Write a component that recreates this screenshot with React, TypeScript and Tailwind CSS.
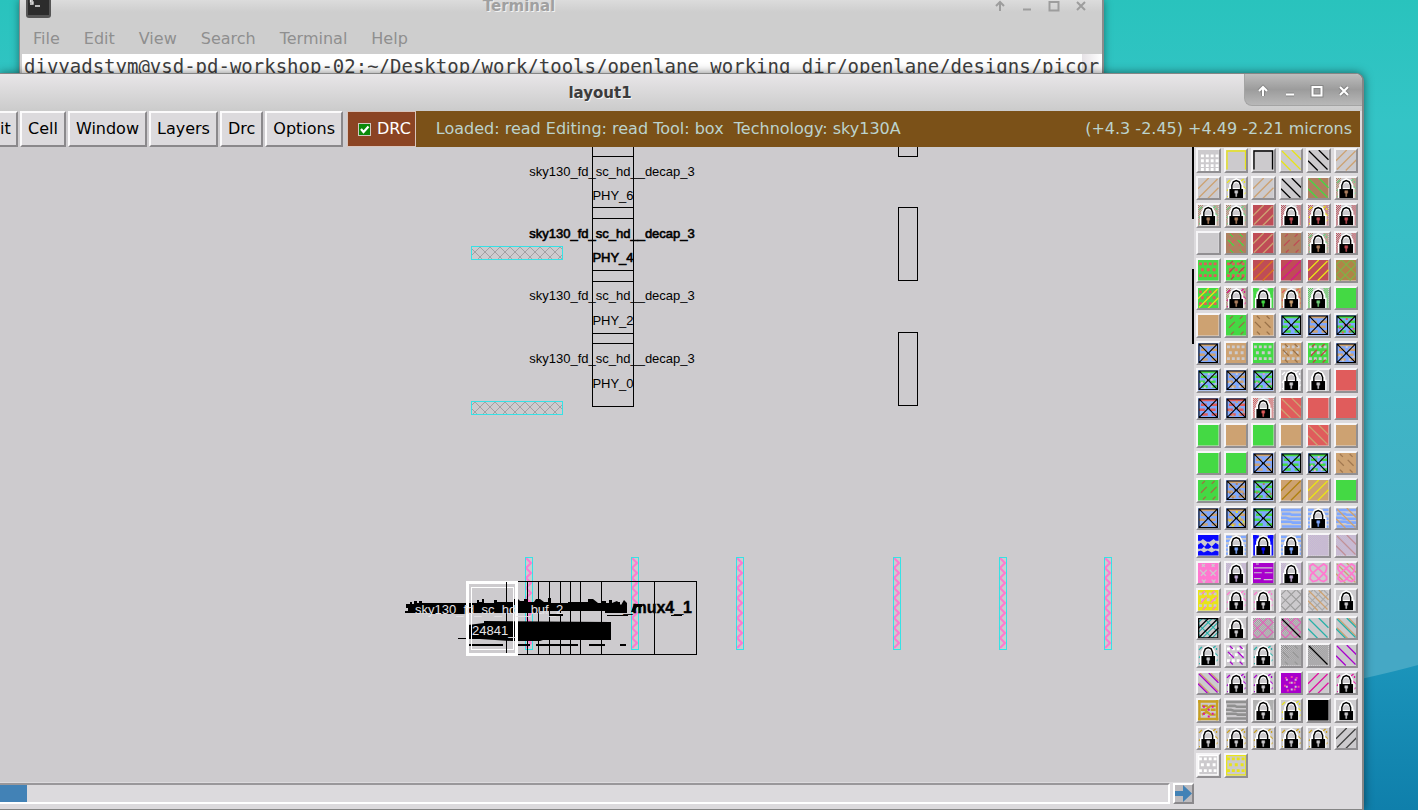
import React from "react";

/* ---------- layer swatches ---------- */

type Layer = [kind: string, color: string];
type SwatchSpec = { bg?: string; layers?: Layer[] };

const GRAY = "#cccacd";
const TAN = "#cda272";
const BROWN = "#ae8060";
const GREEN = "#44d944";
const RED = "#e05c5c";
const BRICK = "#bf4c56";
const BLUE = "#7fa8ff";
const TEAL = "#28b0a8";
const PINK = "#ff78d0";
const PURPLE = "#a800cc";
const GOLD = "#c8a020";
const LAV = "#c4acd8";
const YELLOW = "#e8e418";
const BLACK = "#000000";

const s = (bg?: string, ...layers: Layer[]): SwatchSpec => ({ bg, layers });
const lock = (key: string, ...layers: Layer[]): SwatchSpec => ({ layers: [...layers, ["lock", key]] });
const cross = (...colors: string[]): SwatchSpec => ({
  bg: BLUE,
  layers: [...colors.map((c, i): Layer => [i === 0 ? "bands" : "specks", c]), ["xbox", BLACK]],
});

const swatches: SwatchSpec[] = [
  s(GRAY, ["grid", "#fff"]), s(GRAY, ["frame", YELLOW]), s(GRAY, ["frame", BLACK]), s(GRAY, ["back", YELLOW]), s(GRAY, ["back", BLACK]), s(GRAY, ["fwd", TAN]),
  s(GRAY, ["fwd", TAN]), lock(GRAY, ["edge", YELLOW]), s(GRAY, ["fwd", TAN]), s(GRAY, ["back", BLACK]), s(BROWN, ["back", GREEN]), lock(BROWN, ["noise", BROWN], ["edge", "#6fd08a"]),
  lock(BROWN, ["noise", BROWN], ["edge", "#6fd08a"]), lock(BROWN, ["noise", BROWN], ["edge", "#6fd08a"]), s(BRICK, ["fwd", TAN]), lock(BRICK, ["noise", BRICK]), lock(BRICK, ["noise", BRICK], ["edge", YELLOW]), lock(BRICK, ["noise", BRICK]),
  s(GRAY), s(BROWN, ["shortf", RED], ["shortb", GREEN]), s(BRICK, ["fwd", TAN]), s(BROWN, ["shortf", BRICK]), lock(BROWN, ["noise", BROWN], ["edge", "#6fd08a"]), lock(BRICK, ["noise", BRICK]),
  s(GREEN, ["dots", RED]), s(GREEN, ["dots", RED], ["shortf", "#b04848"]), s(BRICK, ["fwd", "#d87820"]), s(BRICK, ["fwd", "#d8188c"]), s(BRICK, ["fwd", YELLOW]), s("#b08448", ["net", "#7cb448"]),
  s(GREEN, ["dots", RED], ["fwd", YELLOW]), lock(BROWN, ["noise", BROWN], ["edge", "#d8188c"]), lock(GREEN, ["sides", GREEN]), lock(TAN, ["sides", TAN], ["edge", RED]), lock("#6fd07a", ["noise", "#48d048"]), s(GREEN),
  s(TAN), s(GREEN, ["shortf", "#987048"]), s(TAN, ["shortb", "#987048"]), cross(GREEN), cross(TAN), cross(GREEN, RED),
  cross(TAN), s(TAN, ["dots", GRAY]), s(GREEN, ["dots", GRAY]), s(TAN, ["dots", GRAY], ["shortb", "#987048"]), s(GREEN, ["dots", GRAY], ["shortf", "#c04040"]), cross(TAN, GRAY),
  cross(GREEN, GRAY), cross(TAN, GRAY), cross(GREEN, "#d8a0c0"), lock(GRAY, ["edge", "#fff"]), lock(GRAY), s(RED),
  cross(RED), cross(RED, TAN), lock(RED, ["noise", RED]), s(RED, ["back", TAN]), s(RED), s(RED),
  s(GREEN), s(TAN), s(GREEN), s(TAN), s(RED, ["back", TAN]), s(TAN),
  s(GREEN), s(GREEN), cross(TAN), cross(GREEN), cross(GREEN, "#f0b0d0"), s(TAN, ["shortb", "#a07850"]),
  s(GREEN, ["shortf", "#a07040"]), cross(TAN, BROWN), cross(GREEN, BROWN), s(TAN, ["fwd", "#b08010"]), s(TAN, ["fwd", YELLOW]), s(GREEN),
  cross(TAN), cross(TAN, YELLOW), cross(GREEN), s(GRAY, ["waves", BLUE]), lock(BLUE, ["wavesides", BLUE]), s(GRAY, ["waves", BLUE], ["back", TAN]),
  s(GRAY, ["wedges", "#0808ff"]), lock(BLUE, ["wavesides", BLUE]), lock("#0808ff", ["sides", "#0808ff"]), lock(BLUE, ["wavesides", BLUE]), s(GRAY, ["check", LAV]), s(GRAY, ["check", LAV], ["back", "#c09098"]),
  s(PINK, ["shortb", GRAY], ["shortf", GRAY]), lock(LAV, ["noise", LAV]), s(PURPLE, ["slots", GRAY]), lock(LAV, ["noise", LAV]), s(GRAY, ["loops", PINK]), s(GRAY, ["back", TAN], ["loops", PINK]),
  s(YELLOW, ["dots", GRAY], ["shortf", PINK]), lock(GRAY, ["edge", PINK]), lock(GRAY, ["edge", PINK]), s(GRAY, ["net", "#9c9c9c"]), s(GRAY, ["net", "#a8a8a8"], ["back", TAN]), lock(GRAY),
  s(GRAY, ["net", TEAL], ["fwd", BLACK], ["box", BLACK]), lock(GRAY), s(GRAY, ["check", "#989898"], ["net", "#e060b8"]), s(GRAY, ["check", "#989898"], ["net", "#e060b8"], ["diag", BLACK]), s(GRAY, ["back", TEAL]), s(GRAY, ["back2", TAN], ["back", TEAL]),
  lock(GRAY, ["edge", TEAL]), s(GRAY, ["dots", "#fff"], ["shortb", PURPLE]), lock(GRAY, ["edge", TEAL]), s(GRAY, ["check", "#8c8c8c"], ["shortb", "#989898"]), s(GRAY, ["check", "#8c8c8c"], ["diag", BLACK]), s(GRAY, ["back", PURPLE]),
  s(GRAY, ["back2", TAN], ["back", PURPLE]), lock(GRAY, ["edge", PURPLE]), lock(GRAY, ["edge", PURPLE]), s(PURPLE, ["specks", "#f048a8"], ["pin", GRAY]), s(GRAY, ["fwd", "#e010a0"]), lock(GRAY, ["edge", "#e010a0"]),
  s(GRAY, ["goldmesh", GOLD], ["pin", "#e010a0"]), s(GRAY, ["waves", "#909090"]), lock(GRAY, ["sides", "#b0b0b0"]), lock(GRAY, ["edge", YELLOW]), s(BLACK), lock(GRAY),
  lock(GRAY, ["edge", GOLD]), lock(GRAY, ["edge", GOLD]), lock(GRAY, ["edge", GOLD]), lock(GRAY, ["edge", GOLD]), lock(GRAY, ["edge", GOLD]), s(GRAY, ["fwd", "#404040"]),
  s(GRAY, ["dots", "#fff"], ["box", "#fff"]), s(GRAY, ["dots", YELLOW], ["box", YELLOW]),
];

const checkPath = (x0: number, x1: number) => {
  let d = "";
  for (let y = 0; y < 21; y++) for (let x = x0; x < x1; x++) if ((x + y) % 2 === 0) d += `M${x} ${y}h1v1h-1z`;
  return d;
};
const FULL_CHECK = checkPath(0, 21);
const SIDE_CHECK = checkPath(0, 5) + checkPath(16, 21);

function Mark({ kind, color }: { kind: string; color: string }) {
  const line = { stroke: color, fill: "none", strokeWidth: 1.3 };
  switch (kind) {
    case "back":
      return <path d="M1 1L20 20M11 0L21 10M0 11L10 21" {...line} />;
    case "back2":
      return <path d="M2 0L21 19M13 0L21 8M1 10L12 21" {...line} />;
    case "fwd":
      return <path d="M1 20L20 1M0 11L11 0M10 21L21 10" {...line} />;
    case "diag":
      return <path d="M1 1L20 20" {...line} />;
    case "shortf":
      return <path d="M3 13L9 7M13 13L19 7M4 4L7 1M14 4L17 1M5 20L8 17M15 20L18 17" {...line} />;
    case "shortb":
      return <path d="M2 7L8 13M12 7L18 13M4 1L7 4M14 1L17 4M4 17L7 20M14 17L17 20" {...line} />;
    case "dots":
      return <path d="M1 4h3M6 4h3M11 4h3M16 4h3M3 10h3M9 10h3M15 10h3M1 16h3M6 16h3M11 16h3M16 16h3" stroke={color} strokeWidth="3" />;
    case "grid":
      return <path d="M3 6h18M3 11h18M3 16h18M3 20h18" stroke={color} strokeWidth="3" strokeDasharray="3 2" />;
    case "frame":
      return <path d="M1 20V1H20V20" stroke={color} fill="none" strokeWidth="1.4" />;
    case "box":
      return <path d="M.7 .7H20.3V20.3H.7Z" {...line} />;
    case "net":
      return <path d="M0 5L5 0M0 15L15 0M4 21L21 4M14 21L21 14M0 6L15 21M0 16L5 21M6 0L21 15M16 0L21 5" {...line} strokeWidth="1.1" />;
    case "loops":
      return <path d="M2 3L5 1L9 4L16 11L19 14V17L16 19L13 18L3 8L2 6ZM19 3L16 1L12 4L3 12L2 16L5 19L9 18L18 9L19 6Z" {...line} strokeWidth="1.8" />;
    case "check":
      return <path d={FULL_CHECK} fill={color} />;
    case "noise":
      return <path d={SIDE_CHECK} fill={color} />;
    case "edge":
      return <path d="M1 5L4 2M14 4L18 1M17 8L20 11M1 13L3 11M17 18L20 15M19 5V3M1 19H3" {...line} />;
    case "sides":
      return <path d="M2 0V21M19 0V21M0 2H6M15 2H21" stroke={color} strokeWidth="3.4" />;
    case "wavesides":
      return <path d="M0 2H6M0 6H5M0 11H5M0 15H5M0 19H5M15 2H21M16 6H21M16 11H21M16 15H21M16 19H21" stroke={color} strokeWidth="2.4" />;
    case "waves":
      return <path d="M0 2H21M1 6H9L11 7H21M0 10H5L8 11H21M0 14H10L12 15H21M1 19H21" {...line} strokeWidth="2.6" />;
    case "wedges":
      return <path d="M0 0H21V6H18L16 4L12 7H9L5 4L3 6H0ZM0 10L3 8L7 12L10 8L14 12L18 8L21 10V14H16L14 12L11 14H8L6 12L4 14H0ZM0 17L3 16L6 18L10 16L14 18L18 16L21 17V21H0Z" fill={color} />;
    case "bands":
      return <path d="M1 2H20M3 7H9M13 7H20M1 12H7M12 12H18M4 17H10M14 17H20" stroke={color} strokeWidth="2.6" />;
    case "specks":
      return <path d="M4 5h2M15 5h2M8 10h2M13 10h2M3 13h2M17 14h2M6 18h2M13 17h2M10 4h2" stroke={color} strokeWidth="2" />;
    case "slots":
      return <path d="M1 5H20M1 10H9M12 10H20M1 16H8M11 17H20M3 1H6" stroke={color} strokeWidth="1.2" />;
    case "pin":
      return <path d="M5 7h2M14 7h2M10 10h2M5 14h2M14 14h2M10 17h2" stroke={color} strokeWidth="2" />;
    case "goldmesh":
      return <path d="M0 1.5H21M1.5 0V21M19.5 0V21M0 19.5H21M3 10H8L13 6H18M4 15L9 12L13 15H18M4 6H10M13 10H18" {...line} strokeWidth="2.4" />;
    case "xbox":
      return <path d="M1 1H20V20H1ZM1 1L20 20M20 1L1 20M9 10.5H12" {...line} strokeWidth="1.1" />;
    case "lock":
      return (
        <g>
          <path d="M5.5 12V7.5L7.5 4L10.5 2.5L13.5 4L15.5 7.5V12" fill="none" stroke="#fff" strokeWidth="4.6" />
          <path d="M2 10H19V21H2Z" fill="#fff" />
          <path d="M7 10V7L10.5 4.5L14 7V10Z" fill={GRAY} />
          <path d="M6 12V7.5L7.5 4L10.5 2.6L13.5 4L15 7.5V12" fill="none" stroke="#000" strokeWidth="1.5" />
          <path d="M3.5 11.3H17.5V20.6H3.5Z" fill="#000" />
          <path d="M9 13H12V15.5H11V19H10V15.5H9Z" fill={color} stroke={color} strokeWidth=".5" />
        </g>
      );
    default:
      return null;
  }
}

function Swatch({ spec, index }: { spec: SwatchSpec; index: number }) {
  return (
    <div className="aspect-square pt-px pr-0.5 pb-0.5 pl-px">
      <button
        aria-label={`Layer ${index + 1}`}
        className="block size-full border-2 border-t-[#f6f5f7] border-r-[#918f92] border-b-[#918f92] border-l-[#f6f5f7] bg-[#dcdadd]"
      >
        <svg viewBox="0 0 21 21" className="block size-full">
          <rect width="21" height="21" fill={spec.bg ?? GRAY} />
          {spec.layers?.map(([kind, color], i) => <Mark key={i} kind={kind} color={color} />)}
        </svg>
      </button>
    </div>
  );
}

/* ---------- layout canvas ---------- */

const columnEdges = [9, 60, 71, 123, 134, 186, 196];
const cells = [
  { type: 29, id: 53, name: "PHY_6" },
  { type: 91, id: 115, name: "PHY_4", strong: true },
  { type: 153, id: 178, name: "PHY_2" },
  { type: 216, id: 241, name: "PHY_0" },
];
const straps = [525, 631, 736, 893, 999, 1104];
const dividers = [527, 538, 549, 560, 570, 580, 601, 654];
const zigzag = (x: number) => {
  let d = `M${x + 1} 411`;
  for (let i = 1; i <= 18; i++) d += `L${x + (i % 2 ? 6 : 1)} ${411 + i * 5}`;
  return d;
};

function LayoutCanvas() {
  return (
    <svg className="block size-full font-['Liberation_Sans',sans-serif]" shapeRendering="crispEdges">
      <defs>
        <pattern id="mesh" width="10" height="10" patternUnits="userSpaceOnUse">
          <path d="M0 0L10 10M10 0L0 10" stroke="#a2a0a3" strokeWidth="1" shapeRendering="auto" />
        </pattern>
      </defs>

      <g fill="none" stroke="#000" strokeWidth="1">
        <path d="M592.5 0V259.5H633.5V0" strokeWidth="1.4" />
        {columnEdges.map((y) => <path key={y} d={`M592 ${y}.5H634`} />)}
        <path d="M898.500 0V9.500H917.500V0" />
        <rect x="898.5" y="60.5" width="19" height="73" />
        <rect x="898.5" y="185.5" width="19" height="73" />
        <path d="M1193 0V72M1193 122V197" strokeWidth="2" />
      </g>

      {[100, 255].map((y) => (
        <rect key={y} x="471.5" y={y - 0.5} width="91" height="13" fill="url(#mesh)" stroke="#36e2e6" />
      ))}

      {cells.map((c) => (
        <g key={c.name} fontSize="13" textAnchor="middle" fill="#000" stroke="#000" strokeWidth={c.strong ? 0.6 : 0}>
          <text x="612" y={c.type}>sky130_fd_sc_hd__decap_3</text>
          <text x="613" y={c.id}>{c.name}</text>
        </g>
      ))}

      {straps.map((x) => (
        <g key={x} fill="none">
          <path d={zigzag(x)} stroke={PINK} strokeWidth="2" shapeRendering="auto" />
          <rect x={x + 0.5} y="410.5" width="7" height="92" stroke="#36e2e6" />
        </g>
      ))}

      <rect x="466.5" y="434.5" width="230" height="73" fill="none" stroke="#000" />
      {dividers.map((x) => <path key={x} d={`M${x}.5 435V508`} stroke="#000" />)}

      <g fill="#000" shapeRendering="auto">
        <path d="M406 457H410V455H412V457H414V454H417V456H419V454H422V456H477V453H479V455H482V452H484V456H494V453H497V455H514V452H518L520 454H524V452H527V455H534L536 452H540L544 455H548V451H551V456H568V455H588V452H593L598 456H602V454H606V456H609V453H612V457H616V455H620V458H612V466H605V464H540V466H405V464H408V461H406Z" />
        <path d="M612 456L617 454L621 458L624 453L627 456V466H612ZM634 457H642V460H637L634 465H631Z" />
        <path d="M410 465H470V467H430V466H410ZM550 467H563V469H550ZM607 468H628V469H607ZM671 468H682V469H671Z" />
        <path d="M468 478L484 476V474L611 475V493H543L540 494H512L480 492V491H468ZM458 491H480V492H458Z" />
        <path d="M468 497H503V499H468ZM515 497H530V499H515ZM536 497H578V499H536ZM589 497H605V499H589ZM620 497H626V499H620Z" />
        <text x="692" y="466" fontSize="16" fontWeight="700" textAnchor="end" stroke="#000" strokeWidth=".4">_mux4_1</text>
      </g>

      <g fill="none" stroke="#fff">
        <rect x="467.5" y="435.500" width="49" height="72" strokeWidth="3" />
        <rect x="471.5" y="440.5" width="42" height="62" strokeWidth="1" />
      </g>
      <path d="M506.500 435V506" stroke="#000" />
      <g fontSize="13" fill="#e4e2e5">
        <text x="415" y="467">sky130_fd_sc_hd__buf_2</text>
        <text x="472" y="488">24841_</text>
      </g>
    </svg>
  );
}

/* ---------- window chrome ---------- */

function WindowControls({ active }: { active: boolean }) {
  const color = active ? "#ffffff" : "#9d9d9d";
  const halo = active ? "#868686" : "none";
  const icons = [
    { label: "Roll up", d: "M7 12V3.5M3 7L7 3L11 7" },
    { label: "Minimize", d: "M3 10.5H11" },
    { label: "Maximize", d: "M2.5 3H11.500V11.500H2.500Z" },
    { label: "Close", d: "M3 3L11 11M11 3L3 11" },
  ];
  return (
    <>
      {icons.map((icon) => (
        <button key={icon.label} aria-label={icon.label} className="flex size-5 items-center justify-center">
          <svg viewBox="0 0 14 14" className="size-3.5" fill="none">
            <path d={icon.d} stroke={halo} strokeWidth="4" />
            <path d={icon.d} stroke={color} strokeWidth="2" />
          </svg>
        </button>
      ))}
    </>
  );
}

function TerminalWindow() {
  return (
    <section className="absolute top-0 right-[314px] left-[19px] h-24 border-r-2 border-l border-[#8b8b8b] bg-[#cecece] font-['DejaVu_Sans',sans-serif] shadow-[0_0_8px_rgba(0,0,0,0.4)]">
      <header className="relative flex h-6 items-start justify-center bg-linear-to-b from-[#dcdcdc] to-[#cecece] to-50%">
        <svg viewBox="0 0 25 18" className="absolute top-0 left-1.5 h-[18px] w-[25px]">
          <path d="M0 0H25V15Q25 18 22 18H3Q0 18 0 15Z" fill="#555" />
          <path d="M2 0H23V15H2Z" fill="#2c2c2c" />
          <path d="M7 0H4.500V2H7V4H4M9 6H14" stroke="#e8e8e8" strokeWidth="1.3" fill="none" />
        </svg>
        <h2 className="mr-[84px] text-[15px] leading-3 font-bold text-[#a0a0a0] [text-shadow:1px_1px_0_#f2f2f2]">Terminal</h2>
        <div className="absolute top-0 right-[11px] flex gap-[7px] [&>button]:h-3">
          <WindowControls active={false} />
        </div>
      </header>
      <nav className="flex h-[30px] items-center gap-6 pl-[13px] text-[16px] leading-5 text-[#8f8f8f]">
        {["File", "Edit", "View", "Search", "Terminal", "Help"].map((m) => (
          <button key={m}>{m}</button>
        ))}
      </nav>
      <div className="relative ml-0.5 flex h-10 justify-end bg-white">
        <div className="h-full w-5 bg-linear-to-r from-[#e6e2e6] to-white" />
        <pre className="absolute top-0 left-0.5 font-['DejaVu_Sans_Mono',monospace] text-[19px] leading-6 text-[#404040]">
          divyadstym@vsd-pd-workshop-02:~/Desktop/work/tools/openlane_working_dir/openlane/designs/picor
        </pre>
      </div>
    </section>
  );
}

const menuButton =
  "h-full border-2 border-t-[#fbfafb] border-r-[#8a888b] border-b-[#8a888b] bg-[#dcdadd] text-black";

function MenuBar() {
  return (
    <div className="flex h-9 items-stretch text-[16px] leading-5">
      <nav className="flex items-stretch gap-0.5 bg-[#cfcdd0] pr-1">
        <button aria-label="Edit" className={`${menuButton} w-[18px] border-l-0 pr-1.5 text-right`}>it</button>
        {["Cell", "Window", "Layers", "Drc", "Options"].map((m) => (
          <button key={m} className={`${menuButton} border-l-[#fbfafb] px-1.5`}>{m}</button>
        ))}
      </nav>
      <label className="flex items-center gap-1.5 border border-[#d8c4bc] bg-[#8b4423] pr-1 pl-2.5 text-white">
        <span className="relative flex size-[13px]">
          <input type="checkbox" defaultChecked className="size-full appearance-none border border-[#d0c8c0] bg-[#0a8a0a]" />
          <svg viewBox="0 0 13 13" className="pointer-events-none absolute inset-0 size-full" fill="none">
            <path d="M3 6L5.500 9L10.500 3.500" stroke="#fff" strokeWidth="2.2" />
          </svg>
        </span>
        DRC
      </label>
      <div className="flex flex-1 items-center justify-between bg-[#7b5118] pr-2 pl-5 whitespace-pre text-[#bcd3cd]">
        <span>Loaded: read Editing: read Tool: box  Technology: sky130A</span>
        <span>(+4.3 -2.45) +4.49 -2.21 microns</span>
      </div>
    </div>
  );
}

function LayoutWindow() {
  return (
    <section className="absolute top-[73px] right-[54px] bottom-0 left-0 flex flex-col rounded-tr-lg border-t border-r-2 border-b border-[#858585] bg-[#dcdadd] font-['DejaVu_Sans',sans-serif] shadow-[0_0_10px_rgba(0,0,0,0.5)]">
      <header className="relative flex h-[37px] items-center justify-center rounded-tr-lg bg-linear-to-b from-[#e8e6e8] to-[#cbcbcb]">
        <h1 className="mr-[162px] text-[15px] leading-5 font-bold text-[#3c3c3c] [text-shadow:1px_1px_0_#f4f4f4]">layout1</h1>
        <div className="absolute top-0 right-0 flex h-8 items-end gap-[7px] rounded-tr-md rounded-bl-lg border-b border-l border-[#a4a4a4] bg-linear-to-b from-[#bdbdbd] via-[#9c9c9c] to-[#b8b8b8] px-2 pb-1">
          <WindowControls active />
        </div>
      </header>
      <div className="flex min-h-0 flex-1 flex-col pr-0.5">
        <MenuBar />
        <div className="flex min-h-0 flex-1">
          <div className="flex min-w-0 flex-1 flex-col">
            <div className="min-h-0 flex-1 overflow-hidden bg-[#cdcbce]">
              <LayoutCanvas />
            </div>
            <div className="flex h-[27px] items-start gap-[3px] pt-px">
              <div className="flex h-[21px] flex-1 border-t-2 border-r-2 border-b-2 border-t-[#99979a] border-r-white border-b-white bg-[#dcdadd]">
                <div className="w-[27px] bg-[#4282b6]" />
              </div>
              <button aria-label="Scroll right" className="flex size-[21px] items-center justify-center border-2 border-t-white border-r-[#8a888b] border-b-[#8a888b] border-l-white bg-[#bdbbbe]">
                <svg viewBox="0 0 17 17" className="size-full">
                  <path d="M0 6H8V0L17 8.500L8 17V11H0Z" fill="#4282b6" />
                </svg>
              </button>
            </div>
          </div>
          <div className="ml-px w-[165px] shrink-0">
            <div className="grid grid-cols-6">
              {swatches.map((spec, i) => <Swatch key={i} spec={spec} index={i} />)}
            </div>
          </div>
        </div>
      </div>
    </section>
  );
}

function Wallpaper() {
  return (
    <div className="absolute inset-0 bg-linear-to-b from-[#29c3bd] via-[#34c4c6] via-15% to-[#45a8c5] to-80%">
      <svg viewBox="0 0 100 160" preserveAspectRatio="none" className="absolute right-0 bottom-0 h-[160px] w-[100px]">
        <defs>
          <linearGradient id="sea" x1="0" y1="0" x2="0" y2="1">
            <stop offset="0" stopColor="#1b94ba" />
            <stop offset="1" stopColor="#0f7fab" />
          </linearGradient>
        </defs>
        <path d="M0 38Q60 26 100 15V160H0Z" fill="url(#sea)" />
      </svg>
    </div>
  );
}

export default function App() {
  return (
    <main className="relative h-screen min-h-[400px] w-full overflow-hidden">
      <Wallpaper />
      <TerminalWindow />
      <LayoutWindow />
    </main>
  );
}
